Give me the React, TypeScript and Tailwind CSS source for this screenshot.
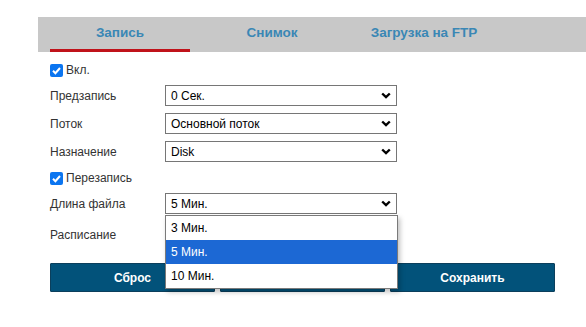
import { useState } from "react";

const tabs = ["Запись", "Снимок", "Загрузка на FTP"];

function Chevron() {
  return (
    <svg width="10" height="7" viewBox="0 0 10 7" className="shrink-0">
      <path d="M1.2 1.5l3.8 3.6 3.8-3.6" fill="none" stroke="#000" strokeWidth="2.4" />
    </svg>
  );
}

function FakeSelect({ value }: { value: string }) {
  return (
    <div className="w-[232px] h-[21px] border border-[#767676] bg-white flex items-center justify-between pl-[5px] pr-[5px] text-[12px] text-black">
      <span>{value}</span>
      <Chevron />
    </div>
  );
}

function Row({ label, children, className = "" }: { label: string; children?: React.ReactNode; className?: string }) {
  return (
    <div className={`flex items-center ${className}`}>
      <div className="w-[115px] text-[12px] text-[#333]">{label}</div>
      {children}
    </div>
  );
}

function Check({ label, className = "" }: { label: string; className?: string }) {
  return (
    <label className={`flex items-center gap-[3px] h-[20px] text-[12px] text-[#333] ${className}`}>
      <span className="w-[13px] h-[13px] rounded-[2px] bg-[#0b75f0] flex items-center justify-center">
        <svg width="11" height="11" viewBox="0 0 11 11">
          <path d="M2 5.8l2.4 2.4L9 3" fill="none" stroke="#fff" strokeWidth="2" />
        </svg>
      </span>
      {label}
    </label>
  );
}

export default function App() {
  const [active] = useState(0);
  const options = ["3 Мин.", "5 Мин.", "10 Мин."];

  return (
    <div className="w-[586px] h-[327px] bg-white overflow-hidden pt-[17px] font-['Liberation_Sans',Arial,sans-serif]">
      {/* Tab bar */}
      <div className="ml-[38px] w-[560px] h-[35px] bg-[#c8c8c8] flex gap-[12px] pl-[12px]">
        {tabs.map((t, i) => (
          <div
            key={t}
            className={`w-[140px] h-full flex items-center justify-center text-[13.5px] font-bold text-[#3a87b5] border-b-[3px] ${
              i === active ? "border-[#c0131a]" : "border-transparent"
            }`}
          >
            {t}
          </div>
        ))}
      </div>

      {/* Form */}
      <div className="pl-[50px] pt-[8px] flex flex-col">
        <Check label="Вкл." />
        <Row label="Предзапись" className="mt-[5px]">
          <FakeSelect value="0 Сек." />
        </Row>
        <Row label="Поток" className="mt-[7px]">
          <FakeSelect value="Основной поток" />
        </Row>
        <Row label="Назначение" className="mt-[7px]">
          <FakeSelect value="Disk" />
        </Row>
        <Check label="Перезапись" className="mt-[6px]" />
        <Row label="Длина файла" className="mt-[5px]">
          <div className="relative">
            <FakeSelect value="5 Мин." />
            {/* Open dropdown list */}
            <div className="absolute left-0 top-[22px] z-10 w-[233px] border border-[#7a7a7a] bg-white shadow-[2px_3px_5px_rgba(0,0,0,0.25)]">
              {options.map((o) => (
                <div
                  key={o}
                  className={`h-[24px] flex items-center pl-[5px] text-[12px] ${
                    o === "5 Мин." ? "bg-[#1c68d4] text-white" : "text-black"
                  }`}
                >
                  {o}
                </div>
              ))}
            </div>
          </div>
        </Row>
        <Row label="Расписание" className="mt-[7px] h-[28px]" />

        {/* Buttons */}
        <div className="mt-[14px] flex gap-[5px]">
          {["Сброс", "Копировать", "Сохранить"].map((b) => (
            <button
              key={b}
              className="w-[165px] h-[29px] bg-[#02527a] text-white text-[12px] font-bold rounded-[1px] border border-[#0b3f5c]"
            >
              {b}
            </button>
          ))}
        </div>
      </div>
    </div>
  );
}
